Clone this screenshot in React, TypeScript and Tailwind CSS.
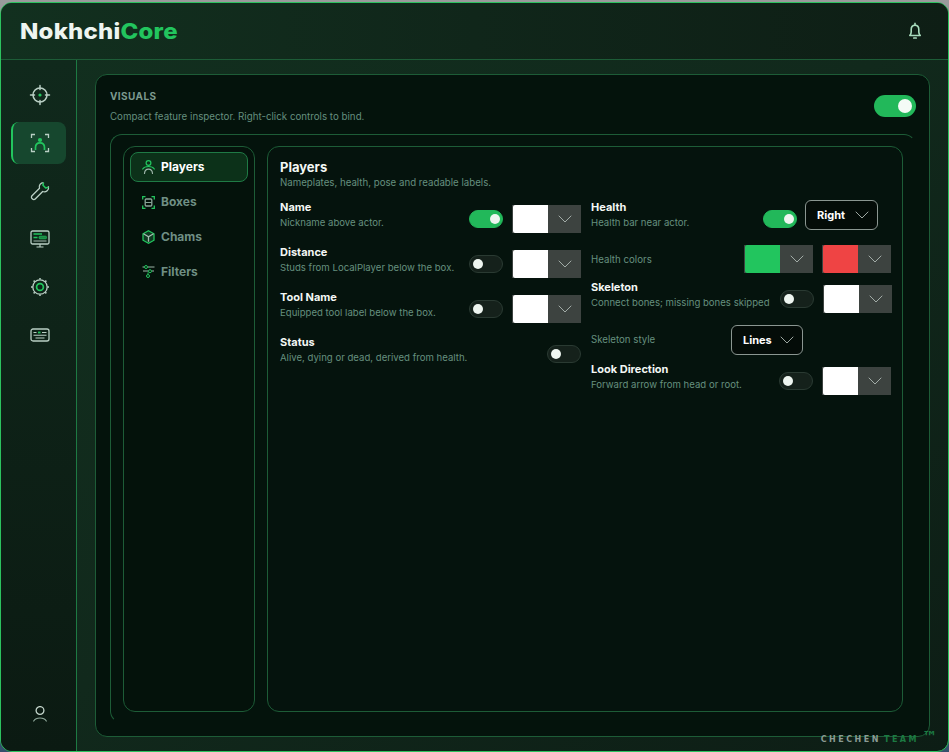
import { ChevronDown } from "lucide-react";

function Crosshair() {
  return (
    <svg width="22" height="22" viewBox="0 0 22 22" fill="none" stroke="#b9cfc4" strokeWidth="1.5" strokeLinecap="round">
      <circle cx="11" cy="11" r="7" />
      <path d="M11 1.5v4M11 16.5v4M1.5 11h4M16.5 11h4" />
      <circle cx="11" cy="11" r="1.6" fill="#22c55e" stroke="none" />
    </svg>
  );
}

function FaceScan() {
  return (
    <svg width="20" height="20" viewBox="0 0 20 20" fill="none" strokeWidth="1.3">
      <path d="M1.500 5V1.500H5M15 1.500h3.500V5M1.500 15v3.500H5M15 18.500h3.500V15" stroke="#b9cfc4" />
      <circle cx="10" cy="7" r="2.100" fill="#22c55e" stroke="none" />
      <path d="M5.500 17v-2.500C5.500 11.500 7.500 9.800 10 9.800s4.500 1.700 4.500 4.700V17" stroke="#22c55e" strokeWidth="1.700" />
    </svg>
  );
}

function Wrench() {
  return (
    <svg width="20" height="20" viewBox="0 0 20 20" fill="none" strokeWidth="1.300" strokeLinejoin="round">
      <path d="M13.500 1.600a4.300 4.300 0 0 0-4 5.700L2 14.800a1.900 1.900 0 0 0 0 2.700l.5.500a1.900 1.900 0 0 0 2.700 0l7.500-7.500a4.300 4.300 0 0 0 5.700-5.200" stroke="#b9cfc4" />
      <path d="M13.500 1.600l-.5 2.700 2.700 2.700 2.700-.7" stroke="#22c55e" strokeWidth="1.600" />
    </svg>
  );
}

function Monitor() {
  return (
    <svg width="20" height="18" viewBox="0 0 20 18" fill="none">
      <rect x="1" y="1" width="18" height="13" rx="1.500" stroke="#b9cfc4" strokeWidth="1.300" />
      <path d="M10 14v3M6.500 17h7" stroke="#b9cfc4" strokeWidth="1.200" />
      <path d="M3.500 4h8.500" stroke="#22c55e" strokeWidth="1.400" />
      <path d="M3.500 7.500h4" stroke="#22c55e" strokeWidth="1.400" />
      <rect x="9" y="6.200" width="7.500" height="2.600" rx="1" fill="#22c55e" fillOpacity="0.6" stroke="#22c55e" strokeWidth="0.700" />
      <path d="M3.500 11h13" stroke="#b9cfc4" strokeWidth="0.900" />
    </svg>
  );
}

function Gear() {
  return (
    <svg width="20" height="20" viewBox="0 0 20 20" fill="none">
      <circle cx="10" cy="10" r="7.200" stroke="#b9cfc4" strokeWidth="1.300" />
      <path d="M10 1v1.600M10 17.400V19M1 10h1.600M17.400 10H19M3.600 3.600l1.200 1.200M15.200 15.200l1.200 1.200M3.600 16.400l1.200-1.200M15.200 4.800l1.200-1.200" stroke="#b9cfc4" strokeWidth="1.500" />
      <circle cx="10" cy="10" r="3.400" stroke="#22c55e" strokeWidth="1.700" />
    </svg>
  );
}

function Keyboard() {
  return (
    <svg width="20" height="14" viewBox="0 0 20 14" fill="none">
      <rect x="1" y="1" width="18" height="12" rx="2" stroke="#b9cfc4" strokeWidth="1.300" />
      <path d="M3.500 4.500h3M12 4.500h4.500M3.500 7.300h13M5.500 10h9" stroke="#b9cfc4" strokeWidth="1.100" />
      <path d="M8 4.500h2.500" stroke="#22c55e" strokeWidth="1.800" />
    </svg>
  );
}

function ProfileIcon() {
  return (
    <svg width="14" height="16" viewBox="0 0 14 16" fill="none" strokeLinecap="round">
      <circle cx="7" cy="4.500" r="3.900" stroke="#c4d6cc" strokeWidth="1.300" />
      <path d="M.7 15c1.200-2 3.300-3 6.300-3s5.100 1 6.300 3" stroke="#8ea699" strokeWidth="1.200" />
    </svg>
  );
}

function PlayerIcon() {
  return (
    <svg width="13" height="14" viewBox="0 0 13 14" fill="none" strokeWidth="1.200" strokeLinecap="round">
      <circle cx="6.500" cy="3" r="2.400" stroke="#22c55e" />
      <path d="M.7 9c1-1.600 3-2.500 5.800-2.500S11.300 7.400 12.300 9" stroke="#22c55e" />
      <path d="M2.500 13.500c.2-2.800 1.800-4.300 4-4.300s3.800 1.500 4 4.300" stroke="#9db5a9" />
    </svg>
  );
}

function BoxIcon() {
  return (
    <svg width="13" height="13" viewBox="0 0 13 13" fill="none">
      <path d="M.7 3.500V.7h2.800M9.500.7h2.800v2.800M.7 9.500v2.800h2.800M9.500 12.300h2.800V9.500" stroke="#22c55e" strokeWidth="1.300" />
      <rect x="3.200" y="3" width="6.600" height="7" rx="1" stroke="#8aa598" strokeWidth="1.300" />
      <path d="M3.200 6.500h6.600" stroke="#8aa598" strokeWidth="1.100" />
    </svg>
  );
}

function CubeIcon() {
  return (
    <svg width="13" height="14" viewBox="0 0 13 14" fill="none" strokeWidth="1.300">
      <path d="M6.500.8l5.500 3v6.400l-5.500 3-5.500-3V3.800z" stroke="#22c55e" fill="#0f3a22" />
      <path d="M1.500 3.800l5 3 5-3M6.500 6.800v5" stroke="#a5bcb0" />
    </svg>
  );
}

function FilterIcon() {
  return (
    <svg width="13" height="14" viewBox="0 0 13 14" fill="none" strokeWidth="1">
      <path d="M.5 2h2M5.500 2h7M1 6h5.500M9.500 6H12" stroke="#9db5a9" />
      <circle cx="4" cy="2" r="1.500" stroke="#22c55e" />
      <circle cx="8" cy="6.200" r="1.500" stroke="#22c55e" />
      <path d="M6 7.500V9" stroke="#22c55e" />
      <circle cx="6" cy="11" r="1.500" stroke="#22c55e" />
    </svg>
  );
}

function Bell() {
  return (
    <svg width="12" height="18" viewBox="0 0 12 18" fill="none" stroke="#a8dcbd" strokeWidth="1.600" strokeLinejoin="round">
      <path d="M.8 13.500c.9-1 1.400-1.800 1.400-3.500V7.500C2.200 5 3.800 3.200 6 3.200s3.800 1.800 3.800 4.300V10c0 1.700.5 2.500 1.400 3.500z" />
      <path d="M6 .8v2.400" />
      <path d="M4.800 16h2.400" strokeWidth="1.700" strokeLinecap="round" />
    </svg>
  );
}

function Toggle({ on, big }: { on?: boolean; big?: boolean }) {
  if (big) {
    return (
      <div className="flex items-center justify-end w-[42px] h-[22px] rounded-full bg-[#22b85a] pr-[4px] shrink-0">
        <div className="w-[14px] h-[14px] rounded-full bg-[#f4fbf6]" />
      </div>
    );
  }
  return (
    <div
      className={`flex items-center w-[34px] h-[18px] rounded-full shrink-0 px-[2.500px] border ${
        on ? "justify-end bg-[#22b85a] border-[#22b85a]" : "justify-start bg-[#15211b] border-[#2a3a32]"
      }`}
    >
      <div className="w-[10px] h-[10px] rounded-full bg-[#eef5f0]" />
    </div>
  );
}

function Swatch({ color }: { color: string }) {
  return (
    <div className="flex w-[69px] h-[28px] shrink-0 bg-[#3d4340] pl-[1px]">
      <div className={`w-[35px] rounded-l-[2px] ${color}`} />
      <div className="flex-1 flex items-center justify-center">
        <ChevronDown size={24} strokeWidth={0.9} className="text-[#aeb8b3]" />
      </div>
    </div>
  );
}

function Select({ label, width }: { label: string; width: string }) {
  return (
    <div className={`flex items-center justify-between h-[30px] pl-[11px] pr-[3px] rounded-[6px] border border-[#8b9691] bg-[#040c08] shrink-0 ${width}`}>
      <span className="text-[11px] font-bold text-white">{label}</span>
      <ChevronDown size={24} strokeWidth={0.9} className="text-[#aeb8b3]" />
    </div>
  );
}

function Info({ title, desc, lift }: { title: string; desc: string; lift?: boolean }) {
  return (
    <div className={`flex-1 min-w-0 flex flex-col ${lift ? "-mt-[9px]" : ""}`}>
      <span className="text-[11px] leading-[15px] font-bold text-[#f3f7f4]">{title}</span>
      <span className="text-[9.6px] leading-[15px] text-[#65907f] whitespace-nowrap">{desc}</span>
    </div>
  );
}

const SIDE_ICONS = [Crosshair, FaceScan, Wrench, Monitor, Gear, Keyboard];

const LEFT_ROWS = [
  { title: "Name", desc: "Nickname above actor.", on: true, swatch: true },
  { title: "Distance", desc: "Studs from LocalPlayer below the box.", swatch: true },
  { title: "Tool Name", desc: "Equipped tool label below the box.", swatch: true },
  { title: "Status", desc: "Alive, dying or dead, derived from health." },
];

const TABS = [
  { label: "Boxes", icon: BoxIcon },
  { label: "Chams", icon: CubeIcon },
  { label: "Filters", icon: FilterIcon },
];

export default function App() {
  return (
    <div className="w-[949px] h-[752px] pt-[2px] bg-gradient-to-b from-[#9a9a9c] to-[#34506c] font-['Inter',sans-serif] overflow-hidden">
      <div className="relative flex flex-col h-[750px] rounded-[12px] border border-[#2cc25f] overflow-hidden bg-gradient-to-br from-[#12301f] via-[#11291c] to-[#0d1d15]">
        {/* top bar */}
        <div className="flex items-center justify-between h-[57px] shrink-0 pl-[19px] pr-[27px] border-b border-[#1d5c37] bg-gradient-to-r from-[#12301f] via-[#10261a] to-[#0e1e15]">
          <div className="text-[22px] font-extrabold tracking-[0.2px] leading-none scale-x-[1.09] origin-left">
            <span className="text-[#eef5f0]">Nokhchi</span>
            <span className="text-[#22c55e]">Core</span>
          </div>
          <Bell />
        </div>

        <div className="flex flex-1 min-h-0">
          {/* icon rail */}
          <div className="flex flex-col w-[76px] shrink-0 border-r border-[#1d7a43] bg-gradient-to-b from-[#10291c] to-[#0b1a12] pt-[14px] pb-[29px] px-[10px]">
            <div className="flex flex-col gap-[6px]">
              {SIDE_ICONS.map((Icon, i) => (
                <div
                  key={i}
                  className={`flex items-center justify-center h-[42px] rounded-[8px] border-l-2 pl-[1px] ${
                    i === 1 ? "bg-[#16472e] border-[#22c55e]" : "border-transparent"
                  }`}
                >
                  <Icon />
                </div>
              ))}
            </div>
            <div className="mt-auto flex justify-center pl-[3px]">
              <ProfileIcon />
            </div>
          </div>

          {/* main */}
          <div className="flex-1 min-w-0 pt-[14px] pl-[18px] pr-[18px] pb-[14px]">
            <div className="flex flex-col h-full rounded-[12px] border border-[#1d5c37] bg-[#04130c] pt-[14px] pl-[14px] pr-[13px]">
              <div className="flex justify-between h-[45px] shrink-0">
                <div>
                  <div className="text-[10px] leading-[14px] font-bold tracking-[0.4px] text-[#7c9a8f]">VISUALS</div>
                  <div className="mt-[7px] text-[9.75px] leading-[14px] text-[#65907f]">
                    Compact feature inspector. Right-click controls to bind.
                  </div>
                </div>
                <div className="pt-[6px]">
                  <Toggle big />
                </div>
              </div>

              {/* only top and left show, the other two edges die out at the corners */}
              <div className="flex gap-[12px] h-[589px] rounded-[12px] border border-[#1d5c37] border-r-transparent border-b-transparent pt-[11px] pl-[12px] pr-[12px]">
                {/* tabs */}
                <div className="flex flex-col gap-[5px] w-[132px] h-[566px] shrink-0 rounded-[12px] border border-[#1d5c37] p-[6px] pt-[5px] bg-[#04120b]">
                  <div className="flex items-center gap-[6px] h-[30px] pl-[11px] rounded-[8px] border border-[#1f7a45] bg-[#0c3119]">
                    <PlayerIcon />
                    <span className="text-[12px] font-bold text-white">Players</span>
                  </div>
                  {TABS.map(t => (
                    <div key={t.label} className="flex items-center gap-[6px] h-[30px] pl-[11px] border border-transparent">
                      <t.icon />
                      <span className="text-[12px] font-bold text-[#6f8f84]">{t.label}</span>
                    </div>
                  ))}
                </div>

                {/* inspector */}
                <div className="flex-1 min-w-0 h-[566px] rounded-[12px] border border-[#1d5c37] bg-[#05130d] pt-[12px] pl-[12px] pr-[12px]">
                  <div className="text-[13px] leading-[16px] font-bold text-[#f3f7f4]">Players</div>
                  <div className="mt-[1px] text-[9.7px] leading-[14px] text-[#65907f]">
                    Nameplates, health, pose and readable labels.
                  </div>

                  <div className="flex gap-[10px] mt-[10px]">
                    <div className="flex flex-col gap-[17px] w-[301px] shrink-0 pt-[5px]">
                      {LEFT_ROWS.map(r => (
                        <div key={r.title} className="flex items-center h-[28px]">
                          <Info title={r.title} desc={r.desc} lift />
                          <Toggle on={r.on} />
                          {r.swatch && <div className="ml-[9px]"><Swatch color="bg-white" /></div>}
                        </div>
                      ))}
                    </div>

                    <div className="flex flex-col w-[300px] shrink-0">
                      <div className="flex items-center h-[30px] pr-[13px]">
                        <Info title="Health" desc="Health bar near actor." />
                        <div className="mt-[8px]"><Toggle on /></div>
                        <div className="ml-[8px]"><Select label="Right" width="w-[73px]" /></div>
                      </div>
                      <div className="flex items-center h-[28px] mt-[15px]">
                        <span className="flex-1 pt-[2px] text-[9.7px] text-[#65907f]">Health colors</span>
                        <Swatch color="bg-[#22c55e]" />
                        <div className="ml-[9px]"><Swatch color="bg-[#ef4444]" /></div>
                      </div>
                      <div className="flex items-center h-[28px] mt-[12px] -mr-[1px]">
                        <Info title="Skeleton" desc="Connect bones; missing bones skipped" lift />
                        <Toggle />
                        <div className="ml-[9px]"><Swatch color="bg-white" /></div>
                      </div>
                      <div className="flex items-center h-[30px] mt-[12px]">
                        <span className="w-[140px] text-[9.7px] text-[#65907f]">Skeleton style</span>
                        <Select label="Lines" width="w-[72px]" />
                      </div>
                      <div className="flex items-center h-[28px] mt-[12px]">
                        <Info title="Look Direction" desc="Forward arrow from head or root." lift />
                        <Toggle />
                        <div className="ml-[9px]"><Swatch color="bg-white" /></div>
                      </div>
                    </div>
                  </div>
                </div>
              </div>
            </div>
          </div>
        </div>

        <div className="absolute right-[11px] bottom-[6px] flex items-center gap-[3px] text-[8px] leading-none font-bold tracking-[2.5px] font-['DejaVu_Sans',sans-serif]">
          <span className="text-[#8a9a93]">CHECHEN</span>
          <span className="text-[#1c7a42]">TEAM</span>
          <span className="text-[#1c7a42] text-[15px] font-bold tracking-normal -mt-[5px]">™</span>
        </div>
      </div>
    </div>
  );
}
